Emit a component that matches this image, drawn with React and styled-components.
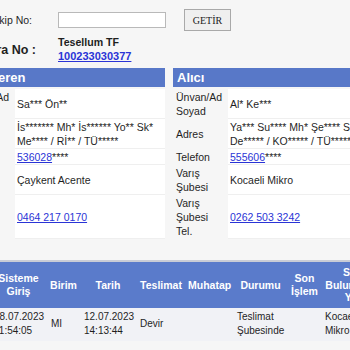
import React from 'react';
import styled, { createGlobalStyle } from 'styled-components';

const GlobalStyle = createGlobalStyle`
  html, body {
    margin: 0;
    background: #f6f6f6;
    overflow: hidden;
  }
  body {
    font-family: "Liberation Sans", Arial, Helvetica, sans-serif;
    font-size: 10.5px;
    color: #1f1f1f;
  }
`;

const Page = styled.div`
  width: 430px;
  margin-left: -40px;
  padding-top: 9px;
`;

const SearchForm = styled.div`
  display: grid;
  grid-template-columns: 76px 1fr;
  column-gap: 22px;
  row-gap: 5px;
  align-items: center;
`;

const FormLabel = styled.div`
  text-align: right;
  font-weight: ${p => (p.$bold ? 700 : 400)};
  font-size: ${p => (p.$bold ? '12.5px' : '10.5px')};
  padding-right: ${p => (p.$bold ? '0' : '4px')};
`;

const FormField = styled.div`
  display: flex;
  align-items: ${p => (p.$stack ? 'flex-start' : 'center')};
  flex-direction: ${p => (p.$stack ? 'column' : 'row')};
  gap: ${p => (p.$stack ? '1px' : '18px')};
`;

const TextInput = styled.input`
  width: 108px;
  height: 16px;
  box-sizing: border-box;
  border: 1px solid #b9b9b9;
  background: #fff;
  margin: 0;
  padding: 0 2px;
`;

const Button = styled.button`
  width: 47px;
  height: 22px;
  border: 1px solid #a9a9a9;
  background: #efefef;
  font-family: "Liberation Serif", "Times New Roman", serif;
  font-size: 10px;
  color: #222;
  padding: 0;
`;

const Company = styled.div`
  font-weight: 700;
  font-size: 10.6px;
  line-height: 13px;
`;

const TrackLink = styled.a`
  font-weight: 700;
  font-size: 11px;
  line-height: 13px;
  color: #2a34d6;
  text-decoration: underline;
`;

const Parties = styled.div`
  display: flex;
  gap: 8px;
  margin-top: 5px;
`;

const Party = styled.section`
  width: 205px;
  display: flex;
  flex-direction: column;
  gap: 2px;
`;

const PartyTitle = styled.div`
  background: #5878c8;
  color: #fff;
  font-weight: 700;
  font-size: 13px;
  height: 19px;
  line-height: 19px;
  padding-left: 4px;
`;

const InfoGrid = styled.div`
  display: grid;
  grid-template-columns: 55px 1fr;
`;

const InfoLabel = styled.div`
  padding: 1px 3px;
  line-height: 14px;
  display: flex;
  align-items: center;
`;

const InfoValue = styled.div`
  background: #fff;
  padding: 1px 2px 0;
  border-bottom: 1px solid #efefef;
  line-height: 14px;
  display: flex;
  align-items: center;
`;

const Phone = styled.a`
  color: #2a34d6;
  text-decoration: underline;
`;

const Movements = styled.table`
  margin-left: 30px;
  margin-top: 21px;
  border-collapse: collapse;
  table-layout: fixed;
  width: 395px;
  border-top: 2px solid #c9ccd6;
`;

const HeadCell = styled.th`
  box-sizing: border-box;
  background: #5a7bcb;
  color: #fff;
  font-weight: 700;
  font-size: 10.5px;
  line-height: 12.5px;
  text-align: center;
  padding: 4px 2px;
  width: ${p => p.$w}px;
`;

const BodyCell = styled.td`
  background: #f1f2f6;
  font-size: 10px;
  line-height: 14px;
  padding: 2px 3px 3px 4px;
  text-align: left;
  vertical-align: middle;
`;

const sender = [
  ['Ünvan/Ad Soyad', 'Sa*** Ön**'],
  ['Adres', 'İs******* Mh* İs****** Yo** Sk* Me**** / Rİ** / TÜ*****'],
  ['Telefon', { link: '536028', rest: '****' }],
  ['Çıkış Şubesi', 'Çaykent Acente'],
  ['Çıkış Şubesi Tel.', { link: '0464 217 0170' }],
];

const receiver = [
  ['Ünvan/Ad Soyad', 'Al* Ke***'],
  ['Adres', 'Ya*** Su**** Mh* Şe**** Sk* De***** / KO***** / TÜ*****'],
  ['Telefon', { link: '555606', rest: '****' }],
  ['Varış Şubesi', 'Kocaeli Mikro'],
  ['Varış Şubesi Tel.', { link: '0262 503 3242' }],
];

const columns = [
  ['Sisteme Giriş', 57],
  ['Birim', 33],
  ['Tarih', 56],
  ['Teslimat', 50],
  ['Muhatap', 47],
  ['Durumu', 55],
  ['Son İşlem', 33],
  ['Son Bulunduğu Yer', 64],
];

const movement = [
  '18.07.2023 11:54:05',
  'MI',
  '12.07.2023 14:13:44',
  'Devir',
  '',
  'Teslimat Şubesinde',
  '',
  'Kocaeli Mikro',
];

const renderValue = v => {
  if (typeof v === 'string') return v;
  return (
    <span>
      <Phone href="#">{v.link}</Phone>
      {v.rest}
    </span>
  );
};

const PartyBox = ({ title, rows }) => (
  <Party>
    <PartyTitle>{title}</PartyTitle>
    <InfoGrid>
      {rows.map(([label, value]) => (
        <React.Fragment key={label}>
          <InfoLabel>{label}</InfoLabel>
          <InfoValue>{renderValue(value)}</InfoValue>
        </React.Fragment>
      ))}
    </InfoGrid>
  </Party>
);

const App = () => (
  <>
    <GlobalStyle />
    <Page>
      <SearchForm>
        <FormLabel>Takip No:</FormLabel>
        <FormField>
          <TextInput type="text" />
          <Button>GETİR</Button>
        </FormField>
        <FormLabel $bold>Fatura No :</FormLabel>
        <FormField $stack>
          <Company>Tesellum TF</Company>
          <TrackLink href="#">100233030377</TrackLink>
        </FormField>
      </SearchForm>

      <Parties>
        <PartyBox title="Gönderen" rows={sender} />
        <PartyBox title="Alıcı" rows={receiver} />
      </Parties>

      <Movements>
        <thead>
          <tr>
            {columns.map(([name, w]) => (
              <HeadCell key={name} $w={w}>{name}</HeadCell>
            ))}
          </tr>
        </thead>
        <tbody>
          <tr>
            {movement.map((cell, i) => (
              <BodyCell key={i}>{cell}</BodyCell>
            ))}
          </tr>
        </tbody>
      </Movements>
    </Page>
  </>
);

export default App;
